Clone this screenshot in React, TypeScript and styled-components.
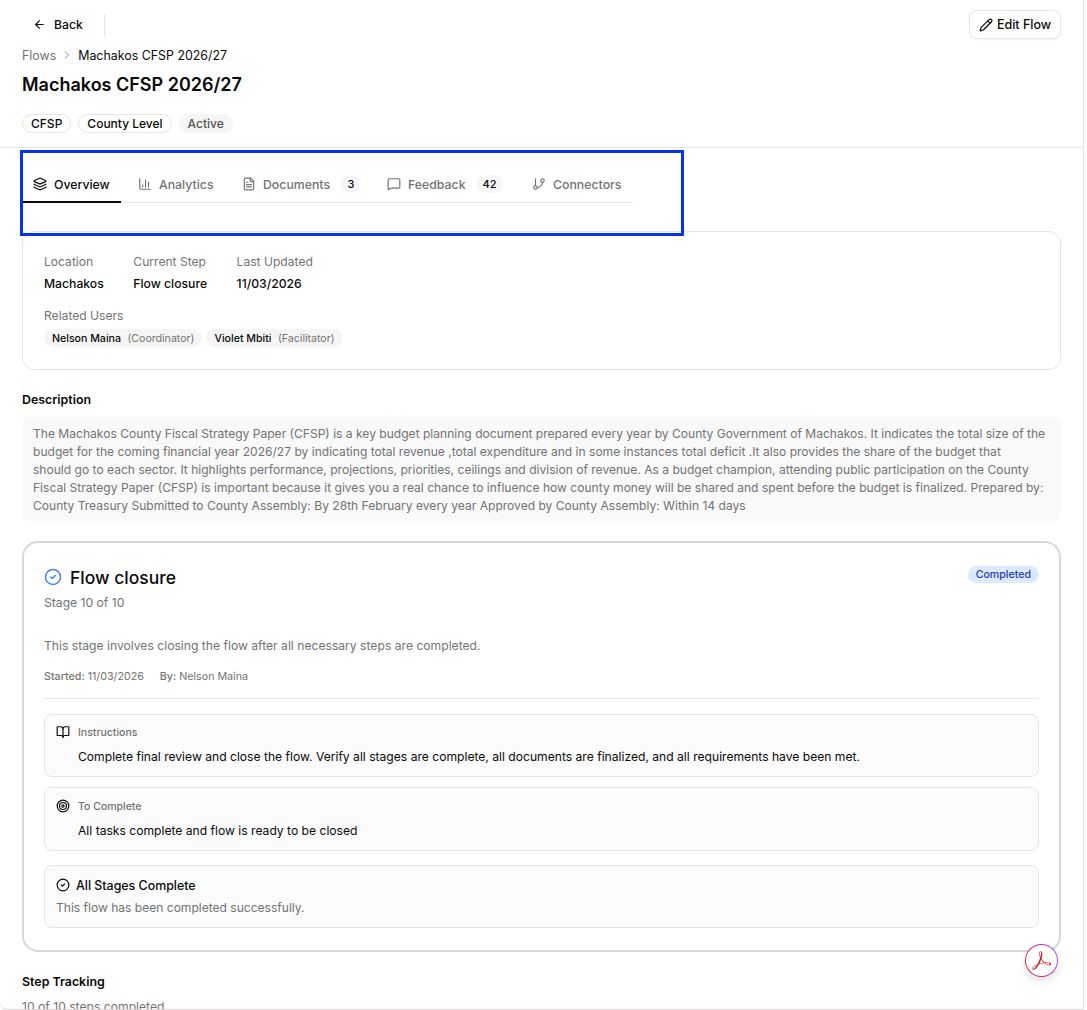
import styled, { createGlobalStyle } from "styled-components";
import {
  ArrowLeft,
  BookOpen,
  ChartColumn,
  ChevronRight,
  CircleCheck,
  FileText,
  GitBranch,
  Layers,
  MessageSquare,
  Pencil,
  Target,
} from "lucide-react";
import { SiAdobeacrobatreader } from "react-icons/si";

const GlobalStyle = createGlobalStyle`
  html, body {
    margin: 0;
    padding: 0;
    background: #ffffff;
    font-family: Inter, "Liberation Sans", sans-serif;
    color: #0a0a0a;
    -webkit-font-smoothing: antialiased;
  }
  * { box-sizing: border-box; }
`;

const Screen = styled.div`
  position: relative;
  width: 1087px;
  height: 1010px;
  overflow: hidden;
  background: #ffffff;
`;

const Panel = styled.main`
  width: 1084px;
  height: 1010px;
  overflow: hidden;
  background: #ffffff;
  border-right: 1px solid #e5e5e5;
  border-bottom: 1px solid #dcd6d9;
  border-bottom-left-radius: 8px;
`;

const Header = styled.header`
  padding: 10px 22px 0;
  height: 148px;
  border-bottom: 1px solid #e5e5e5;
`;

const TopBar = styled.div`
  display: flex;
  align-items: center;
  justify-content: space-between;
  height: 29px;
`;

const BackGroup = styled.div`
  display: flex;
  align-items: center;
  height: 22px;
  padding-left: 11px;
  padding-right: 21px;
  border-right: 1px solid #e5e5e5;
  gap: 8px;
  font-size: 12.2px;
  font-weight: 450;
`;

const EditButton = styled.button`
  display: flex;
  align-items: center;
  gap: 4px;
  height: 29px;
  width: 92px;
  justify-content: center;
  font: 450 12.5px Inter, "Liberation Sans", sans-serif;
  color: #0a0a0a;
  background: #ffffff;
  border: 1px solid #e5e5e5;
  border-radius: 8px;
  box-shadow: 0 1px 2px rgba(0, 0, 0, 0.05);
`;

const Breadcrumb = styled.nav`
  display: flex;
  align-items: center;
  gap: 5px;
  margin-top: 7px;
  height: 18px;
  font-size: 12.4px;
  color: #737373;
  svg { color: #8a8a8a; }
`;

const CrumbCurrent = styled.span`
  color: #0a0a0a;
`;

const Title = styled.h1`
  margin: 7px 0 0;
  font-size: 18px;
  line-height: 28px;
  font-weight: 600;
`;

const BadgeRow = styled.div`
  display: flex;
  gap: 7px;
  margin-top: 15px;
`;

const Badge = styled.span<{ $muted?: boolean }>`
  display: inline-flex;
  align-items: center;
  height: 19px;
  padding: 0 8px;
  border-radius: 10px;
  font-size: 12px;
  font-weight: 450;
  color: ${(p) => (p.$muted ? "#525252" : "#0a0a0a")};
  background: ${(p) => (p.$muted ? "#f5f5f5" : "#ffffff")};
  border: 1px solid ${(p) => (p.$muted ? "#f5f5f5" : "#e5e5e5")};
`;

const Content = styled.div`
  padding: 0 22px;
`;

const TabsSection = styled.section`
  position: relative;
  padding-top: 16px;
  height: 83px;
`;

const Highlight = styled.div`
  position: absolute;
  left: -2px;
  top: 2px;
  width: 664px;
  height: 86px;
  border: 3px solid #0433ec;
  pointer-events: none;
  z-index: 2;
`;

const TabList = styled.div`
  display: flex;
  width: 611px;
  height: 39px;
  border-bottom: 1px solid #e5e5e5;
`;

const Tab = styled.div<{ $active?: boolean; $width: number; $inset: number }>`
  display: flex;
  align-items: center;
  gap: 7px;
  width: ${(p) => p.$width}px;
  height: 39px;
  padding: 3px 0 0 ${(p) => p.$inset}px;
  font-size: 12.3px;
  font-weight: 450;
  color: ${(p) => (p.$active ? "#0a0a0a" : "#737373")};
  border-bottom: 2px solid ${(p) => (p.$active ? "#0a0a0a" : "transparent")};
`;

const TabCount = styled.span`
  display: inline-flex;
  align-items: center;
  justify-content: center;
  min-width: 20px;
  height: 18px;
  margin-left: 4px;
  padding: 0 6px;
  border-radius: 9px;
  background: #f5f5f5;
  color: #0a0a0a;
  font-size: 11px;
`;

const InfoCard = styled.section`
  height: 139px;
  padding: 22px 21px 0;
  border: 1px solid #e5e5e5;
  border-radius: 12px;
`;

const FactRow = styled.div`
  display: flex;
  gap: 29.5px;
`;

const Fact = styled.div`
  display: flex;
  flex-direction: column;
  gap: 6px;
`;

const FactLabel = styled.span`
  font-size: 12.1px;
  line-height: 16px;
  color: #737373;
`;

const FactValue = styled.span`
  font-size: 12.2px;
  line-height: 16px;
  font-weight: 450;
`;

const RelatedUsers = styled.div`
  display: flex;
  flex-direction: column;
  gap: 5px;
  margin-top: 16px;
`;

const UserRow = styled.div`
  display: flex;
  gap: 4px;
`;

const UserPill = styled.span`
  display: inline-flex;
  align-items: center;
  gap: 6.5px;
  height: 18px;
  padding: 0 8px;
  border-radius: 9px;
  background: #f5f5f5;
  font-size: 10.6px;
  font-weight: 500;
`;

const UserRole = styled.span`
  color: #737373;
  font-weight: 400;
`;

const SectionHeading = styled.h2`
  margin: 22px 0 0;
  font-size: 12.4px;
  line-height: 16px;
  font-weight: 600;
`;

const DescriptionBox = styled.p`
  margin: 9px 0 0;
  padding: 8px 11px 0;
  height: 104px;
  background: #f9f9f9;
  border-radius: 8px;
  font-size: 12.07px;
  line-height: 18px;
  color: #737373;
  white-space: nowrap;
`;

const StageCard = styled.section`
  margin-top: 20px;
  height: 411px;
  padding: 20px 20px 0;
  border: 2px solid #d8d8d8;
  border-radius: 16px;
`;

const StageHead = styled.div`
  display: flex;
  justify-content: space-between;
  align-items: flex-start;
`;

const StageTitle = styled.div`
  display: flex;
  align-items: center;
  gap: 8px;
  height: 28px;
  font-size: 17.5px;
  font-weight: 500;
  svg { color: #3b82f6; }
`;

const StatusBadge = styled.span`
  display: inline-flex;
  align-items: center;
  height: 17px;
  margin-top: 3px;
  padding: 0 8px;
  border-radius: 9px;
  background: #dbeafe;
  color: #1e40af;
  font-size: 10.6px;
  font-weight: 500;
`;

const StageNumber = styled.div`
  margin-top: 3px;
  font-size: 12.15px;
  line-height: 18px;
  color: #737373;
`;

const StageText = styled.p`
  margin: 25px 0 0;
  font-size: 12.15px;
  line-height: 18px;
  color: #737373;
`;

const MetaRow = styled.div`
  display: flex;
  gap: 16px;
  margin-top: 15px;
  font-size: 10.7px;
  line-height: 14px;
  color: #737373;
`;

const MetaKey = styled.span`
  font-weight: 500;
`;

const Rule = styled.hr`
  margin: 14px 0 15px;
  border: 0;
  border-top: 1px solid #e5e5e5;
`;

const NoteBox = styled.div<{ $height: number; $gap: number; $top: number }>`
  height: ${(p) => p.$height}px;
  margin-bottom: ${(p) => p.$gap}px;
  padding: ${(p) => p.$top}px 11px 0;
  background: #fbfbfb;
  border: 1px solid #e5e5e5;
  border-radius: 8px;
`;

const NoteLabel = styled.div`
  display: flex;
  align-items: center;
  gap: 8px;
  height: 16px;
  font-size: 10.5px;
  font-weight: 500;
  color: #737373;
  svg { color: #0a0a0a; }
`;

const NoteBody = styled.div`
  margin: 7px 0 0 22px;
  font-size: 12.12px;
  line-height: 20px;
`;

const DoneTitle = styled.div`
  display: flex;
  align-items: center;
  gap: 6px;
  height: 20px;
  font-size: 12.4px;
  font-weight: 500;
`;

const DoneText = styled.div`
  margin-top: 4px;
  font-size: 12.05px;
  line-height: 18px;
  color: #737373;
`;

const ProgressText = styled.div`
  margin-top: 9px;
  font-size: 12.15px;
  line-height: 16px;
  color: #737373;
`;

const PdfButton = styled.button`
  position: absolute;
  left: 1025px;
  top: 944px;
  width: 33px;
  height: 33px;
  display: flex;
  align-items: center;
  justify-content: center;
  padding: 0;
  border: 1px solid transparent;
  border-radius: 50%;
  color: #d9111a;
  background:
    linear-gradient(#ffffff, #ffffff) padding-box,
    linear-gradient(70deg, #ef2b3a, #c026a8 55%, #8b5cf6) border-box;
  box-shadow: 0 4px 10px rgba(0, 0, 0, 0.12);
`;

const tabs = [
  { label: "Overview", width: 99, inset: 11, Icon: Layers, active: true },
  { label: "Analytics", width: 109, inset: 17, Icon: ChartColumn },
  { label: "Documents", width: 145, inset: 12, count: "3", Icon: FileText },
  { label: "Feedback", width: 145, inset: 12, count: "42", Icon: MessageSquare },
  { label: "Connectors", width: 113, inset: 12, Icon: GitBranch },
];

const facts = [
  { label: "Location", value: "Machakos" },
  { label: "Current Step", value: "Flow closure" },
  { label: "Last Updated", value: "11/03/2026" },
];

const users = [
  { name: "Nelson Maina", role: "(Coordinator)" },
  { name: "Violet Mbiti", role: "(Facilitator)" },
];

export default function App() {
  return (
    <Screen>
      <GlobalStyle />
      <Panel>
        <Header>
          <TopBar>
            <BackGroup>
              <ArrowLeft size={13} />
              Back
            </BackGroup>
            <EditButton>
              <Pencil size={14} />
              Edit Flow
            </EditButton>
          </TopBar>
          <Breadcrumb>
            <span>Flows</span>
            <ChevronRight size={12} />
            <CrumbCurrent>Machakos CFSP 2026/27</CrumbCurrent>
          </Breadcrumb>
          <Title>Machakos CFSP 2026/27</Title>
          <BadgeRow>
            <Badge>CFSP</Badge>
            <Badge>County Level</Badge>
            <Badge $muted>Active</Badge>
          </BadgeRow>
        </Header>
        <Content>
          <TabsSection>
            <TabList>
              {tabs.map(({ label, width, inset, count, Icon, active }) => (
                <Tab key={label} $active={active} $width={width} $inset={inset}>
                  <Icon size={14} />
                  {label}
                  {count && <TabCount>{count}</TabCount>}
                </Tab>
              ))}
            </TabList>
            <Highlight />
          </TabsSection>
          <InfoCard>
            <FactRow>
              {facts.map((f) => (
                <Fact key={f.label}>
                  <FactLabel>{f.label}</FactLabel>
                  <FactValue>{f.value}</FactValue>
                </Fact>
              ))}
            </FactRow>
            <RelatedUsers>
              <FactLabel>Related Users</FactLabel>
              <UserRow>
                {users.map((u) => (
                  <UserPill key={u.name}>
                    {u.name}
                    <UserRole>{u.role}</UserRole>
                  </UserPill>
                ))}
              </UserRow>
            </RelatedUsers>
          </InfoCard>
          <SectionHeading>Description</SectionHeading>
          <DescriptionBox>
            The Machakos County Fiscal Strategy Paper (CFSP) is a key budget planning document prepared every year by County Government of Machakos. It indicates the total size of the
            <br />
            budget for the coming financial year 2026/27 by indicating total revenue ,total expenditure and in some instances total deficit .It also provides the share of the budget that
            <br />
            should go to each sector. It highlights performance, projections, priorities, ceilings and division of revenue. As a budget champion, attending public participation on the County
            <br />
            Fiscal Strategy Paper (CFSP) is important because it gives you a real chance to influence how county money will be shared and spent before the budget is finalized. Prepared by:
            <br />
            County Treasury Submitted to County Assembly: By 28th February every year Approved by County Assembly: Within 14 days
          </DescriptionBox>
          <StageCard>
            <StageHead>
              <StageTitle>
                <CircleCheck size={18} />
                Flow closure
              </StageTitle>
              <StatusBadge>Completed</StatusBadge>
            </StageHead>
            <StageNumber>Stage 10 of 10</StageNumber>
            <StageText>This stage involves closing the flow after all necessary steps are completed.</StageText>
            <MetaRow>
              <span>
                <MetaKey>Started:</MetaKey> 11/03/2026
              </span>
              <span>
                <MetaKey>By:</MetaKey> Nelson Maina
              </span>
            </MetaRow>
            <Rule />
            <NoteBox $height={63} $gap={10} $top={9}>
              <NoteLabel>
                <BookOpen size={14} />
                Instructions
              </NoteLabel>
              <NoteBody>
                Complete final review and close the flow. Verify all stages are complete, all documents are finalized, and all requirements have been met.
              </NoteBody>
            </NoteBox>
            <NoteBox $height={64} $gap={14} $top={10}>
              <NoteLabel>
                <Target size={14} />
                To Complete
              </NoteLabel>
              <NoteBody>All tasks complete and flow is ready to be closed</NoteBody>
            </NoteBox>
            <NoteBox $height={63} $gap={0} $top={9}>
              <DoneTitle>
                <CircleCheck size={14} />
                All Stages Complete
              </DoneTitle>
              <DoneText>This flow has been completed successfully.</DoneText>
            </NoteBox>
          </StageCard>
          <SectionHeading>Step Tracking</SectionHeading>
          <ProgressText>10 of 10 steps completed</ProgressText>
        </Content>
      </Panel>
      <PdfButton aria-label="Open PDF">
        <SiAdobeacrobatreader size={19} />
      </PdfButton>
    </Screen>
  );
}
